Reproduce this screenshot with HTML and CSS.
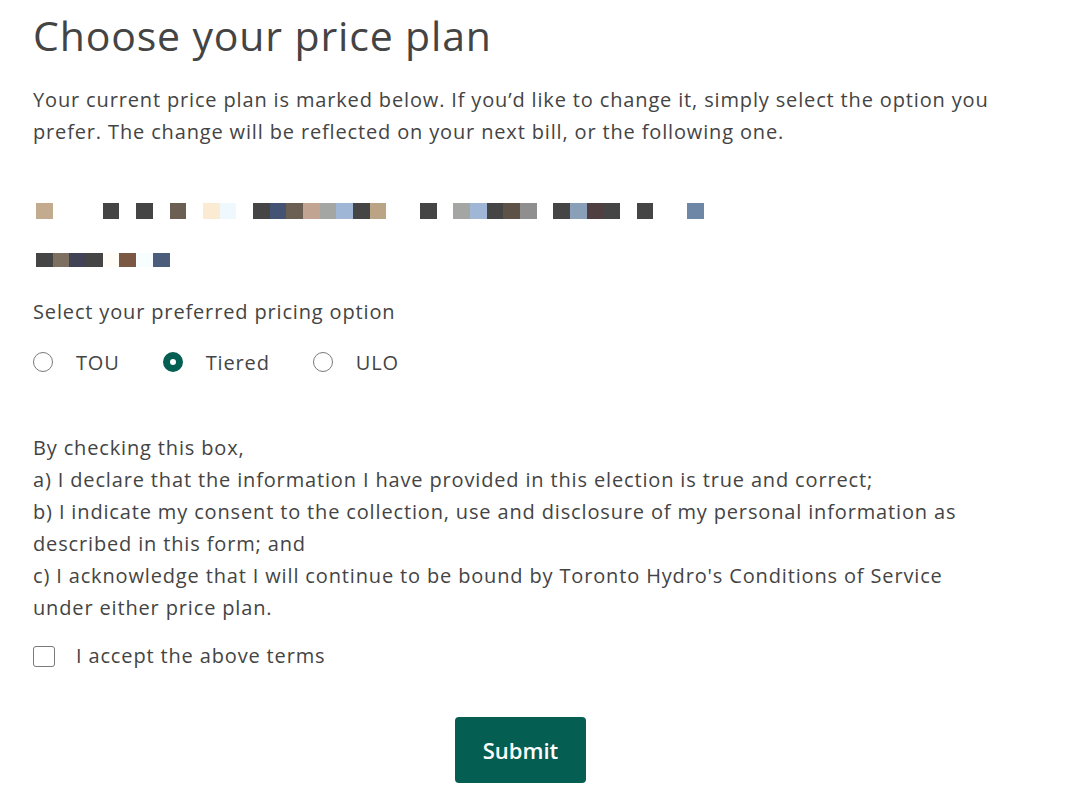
FILE: index.html
```html
<!DOCTYPE html>
<html lang="en">

<head>
    <meta charset="UTF-8">
    <meta name="viewport" content="width=device-width, initial-scale=1.0">
    <title>Choose your price plan</title>
    <link rel="stylesheet" href="styles.css">
</head>

<body>
    <div class="page">
        <h1 class="title">Choose your price plan</h1>

        <p class="intro">Your current price plan is marked below. If you’d like to change it, simply select the option you prefer. The change will be reflected on your next bill, or the following one.</p>

        <!-- Account details (blurred) -->
        <div class="blur-row row-one">
            <span class="px c1"></span><span class="px"></span><span class="px"></span><span class="px"></span>
            <span class="px dk"></span><span class="px"></span><span class="px dk"></span><span class="px"></span>
            <span class="px c2"></span><span class="px"></span><span class="px c3"></span><span class="px c4"></span>
            <span class="px"></span><span class="px dk"></span><span class="px c5"></span><span class="px c2"></span>
            <span class="px c6"></span><span class="px c7"></span><span class="px c8"></span><span class="px dk"></span>
            <span class="px c9"></span><span class="px"></span><span class="px"></span><span class="px dk"></span>
            <span class="px"></span><span class="px c7"></span><span class="px c8"></span><span class="px dk"></span>
            <span class="px c10"></span><span class="px c11"></span><span class="px"></span><span class="px dk"></span>
            <span class="px c12"></span><span class="px c13"></span><span class="px dk"></span><span class="px"></span>
            <span class="px dk"></span><span class="px"></span><span class="px"></span><span class="px c14"></span>
        </div>
        <div class="blur-row row-two">
            <span class="px dk"></span><span class="px c15"></span><span class="px c16"></span><span class="px dk"></span>
            <span class="px c17"></span><span class="px c18"></span><span class="px c19"></span><span class="px c20"></span>
        </div>

        <form id="plan-form">
            <p class="field-label">Select your preferred pricing option</p>
            <div class="options">
                <label class="option"><input type="radio" name="plan" value="tou"> TOU</label>
                <label class="option"><input type="radio" name="plan" value="tiered" checked> Tiered</label>
                <label class="option"><input type="radio" name="plan" value="ulo"> ULO</label>
            </div>

            <p class="terms">By checking this box,<br>
                a) I declare that the information I have provided in this election is true and correct;<br>
                b) I indicate my consent to the collection, use and disclosure of my personal information as described in this form; and<br>
                c) I acknowledge that I will continue to be bound by Toronto Hydro's Conditions of Service under either price plan.</p>

            <label class="accept"><input type="checkbox" name="accept"> I accept the above terms</label>

            <div class="actions">
                <button type="submit">Submit</button>
            </div>
        </form>
    </div>
</body>

</html>
```

FILE: styles.css
```css
body {
    margin: 0;
    padding: 0;
    background-color: #fff;
    font-family: 'Open Sans', 'Liberation Sans', sans-serif;
    color: #444;
    letter-spacing: 0.85px;
}

.page {
    width: 975px;
    padding: 0 0 0 33px;
}

.title {
    margin: 0;
    padding-top: 10px;
    font-size: 41px;
    font-weight: 400;
    line-height: 50px;
}

.intro {
    margin: 24px 0 0;
    font-size: 20px;
    line-height: 32px;
}

/* Blurred account info */
.blur-row {
    display: flex;
    margin-left: 3px;
}

.row-one {
    margin-top: 55px;
    height: 16px;
}

.row-two {
    margin-top: 34px;
    height: 14px;
}

.px {
    width: 16.7px;
    height: 100%;
    flex: none;
}

.dk { background-color: #454545; }
.c1 { background-color: #c2ab8f; }
.c2 { background-color: #6b5e52; }
.c3 { background-color: #fbebd2; }
.c4 { background-color: #eef8fd; }
.c5 { background-color: #445373; }
.c6 { background-color: #c1a592; }
.c7 { background-color: #a3a6a3; }
.c8 { background-color: #a0b6d6; }
.c9 { background-color: #bba486; }
.c10 { background-color: #5d5247; }
.c11 { background-color: #8f8f8f; }
.c12 { background-color: #8aa0b8; }
.c13 { background-color: #4f3f40; }
.c14 { background-color: #6e87a7; }
.c15 { background-color: #7d7060; }
.c16 { background-color: #414255; }
.c17 { background-color: #fffdf5; }
.c18 { background-color: #7a5843; }
.c19 { background-color: #f8fdff; }
.c20 { background-color: #4b5d7b; }

.field-label {
    margin: 29px 0 0;
    font-size: 20px;
    line-height: 32px;
}

.options {
    display: flex;
    margin-top: 18px;
    height: 32px;
    align-items: center;
}

.option {
    display: flex;
    align-items: center;
    font-size: 20px;
    margin-right: 43px;
}

input[type="radio"] {
    appearance: none;
    -webkit-appearance: none;
    width: 20px;
    height: 20px;
    margin: 0 23px 0 0;
    border: 1.5px solid #7a7a7a;
    border-radius: 50%;
    box-sizing: border-box;
}

input[type="radio"]:checked {
    border: 7px solid #045e52;
    background-color: #fff;
}

.terms {
    max-width: 962px;
    margin: 54px 0 0;
    font-size: 20px;
    line-height: 32px;
}

.accept {
    display: flex;
    align-items: center;
    margin-top: 16px;
    font-size: 20px;
    line-height: 32px;
}

input[type="checkbox"] {
    appearance: none;
    -webkit-appearance: none;
    width: 22px;
    height: 21px;
    margin: 0 21px 0 0;
    border: 1.5px solid #7a7a7a;
    border-radius: 3px;
    box-sizing: border-box;
}

.actions {
    display: flex;
    justify-content: center;
    margin-top: 45px;
}

button {
    width: 131px;
    height: 66px;
    background-color: #045e52;
    color: #fff;
    border: none;
    border-radius: 4px;
    font-family: 'Open Sans', 'Liberation Sans', sans-serif;
    font-size: 22px;
    font-weight: 600;
    letter-spacing: 0;
    cursor: pointer;
}
```
